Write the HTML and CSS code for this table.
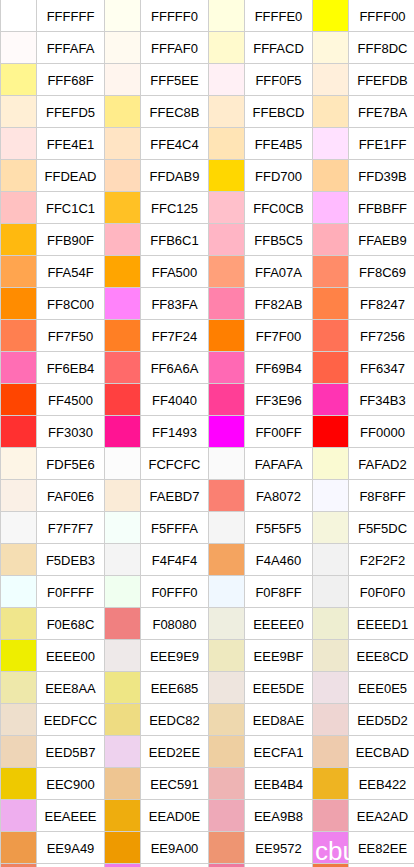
FILE: index.html
```html
<!DOCTYPE html>
<html>
<head>
<meta charset="utf-8">
<link rel="stylesheet" href="styles.css">
</head>
<body>
<div class="page">
<div class="grid" id="grid"></div>
<span class="watermark">cbu</span>
</div>
<script src="app.js"></script>
</body>
</html>
```
FILE: styles.css
```css
html, body {
  margin: 0;
  padding: 0;
  background: #fff;
  overflow: hidden;
}
.page {
  position: relative;
  width: 414px;
  height: 867px;
  overflow: hidden;
}
.grid {
  display: grid;
  grid-template-columns: repeat(4, 36px 68px);
  grid-auto-rows: 32px;
  width: 417px;
  border-top: 1px solid #cfcfcf;
  border-left: 1px solid #cfcfcf;
  box-sizing: border-box;
  margin-top: -1px;
  margin-left: 0;
}
.cell {
  border-right: 1px solid #cfcfcf;
  border-bottom: 1px solid #cfcfcf;
  box-sizing: border-box;
}
.code {
  display: flex;
  align-items: center;
  justify-content: center;
  font-family: "Liberation Sans", Arial, sans-serif;
  font-size: 13px;
  color: #000;
  background: #fff;
  padding-top: 1px;
}
.watermark {
  position: absolute;
  left: 315px;
  top: 838px;
  font-family: "Liberation Sans", Arial, sans-serif;
  font-size: 26px;
  color: #fff;
  line-height: 1;
}
```
FILE: app.js
```js
var codes = [
"FFFFFF","FFFFF0","FFFFE0","FFFF00",
"FFFAFA","FFFAF0","FFFACD","FFF8DC",
"FFF68F","FFF5EE","FFF0F5","FFEFDB",
"FFEFD5","FFEC8B","FFEBCD","FFE7BA",
"FFE4E1","FFE4C4","FFE4B5","FFE1FF",
"FFDEAD","FFDAB9","FFD700","FFD39B",
"FFC1C1","FFC125","FFC0CB","FFBBFF",
"FFB90F","FFB6C1","FFB5C5","FFAEB9",
"FFA54F","FFA500","FFA07A","FF8C69",
"FF8C00","FF83FA","FF82AB","FF8247",
"FF7F50","FF7F24","FF7F00","FF7256",
"FF6EB4","FF6A6A","FF69B4","FF6347",
"FF4500","FF4040","FF3E96","FF34B3",
"FF3030","FF1493","FF00FF","FF0000",
"FDF5E6","FCFCFC","FAFAFA","FAFAD2",
"FAF0E6","FAEBD7","FA8072","F8F8FF",
"F7F7F7","F5FFFA","F5F5F5","F5F5DC",
"F5DEB3","F4F4F4","F4A460","F2F2F2",
"F0FFFF","F0FFF0","F0F8FF","F0F0F0",
"F0E68C","F08080","EEEEE0","EEEED1",
"EEEE00","EEE9E9","EEE9BF","EEE8CD",
"EEE8AA","EEE685","EEE5DE","EEE0E5",
"EEDFCC","EEDC82","EED8AE","EED5D2",
"EED5B7","EED2EE","EECFA1","EECBAD",
"EEC900","EEC591","EEB4B4","EEB422",
"EEAEEE","EEAD0E","EEA9B8","EEA2AD",
"EE9A49","EE9A00","EE9572","EE82EE",
"EE8262","EE7AE9","EE799F","EE7942"
];
var grid = document.getElementById("grid");
var html = "";
for (var i = 0; i < codes.length; i++) {
  var c = codes[i];
  html += '<div class="cell swatch" style="background:#' + c + '"></div>';
  html += '<div class="cell code">' + c + '</div>';
}
grid.innerHTML = html;
```
